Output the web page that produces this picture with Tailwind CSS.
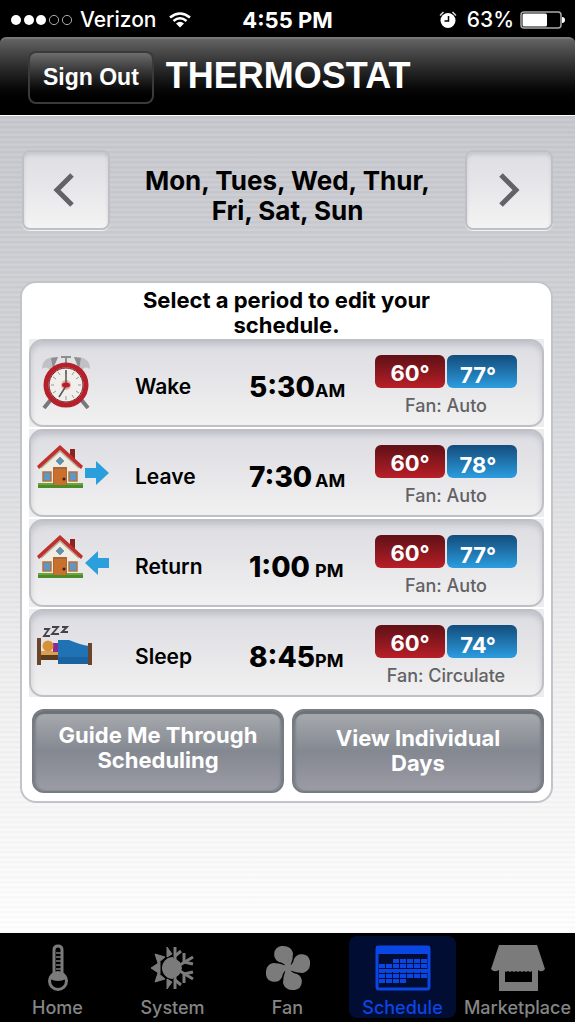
<!DOCTYPE html>
<html lang="en">

<head>
    <meta charset="UTF-8">
    <meta name="viewport" content="width=device-width, initial-scale=1.0">
    <title>Thermostat</title>
    <script src="https://cdn.jsdelivr.net/npm/@tailwindcss/browser@4"></script>
</head>

<body class="bg-black font-[Inter,sans-serif] text-black">
    <!-- shared drawings -->
    <svg class="hidden">
        <symbol id="house" viewBox="0 0 46 44">
            <path d="M33 4h5v14h-5z" fill="#8d2320" />
            <path d="M5 21 23 5l18 16v18H5z" fill="#efece2" />
            <path d="M1 38h45v5H1z" fill="#4c8a2c" />
            <path d="M1 38h45v2H1z" fill="#6aa640" />
            <path d="M4 23 23 6l19 17" fill="none" stroke="#b3aa9c" stroke-width="1.500" />
            <path d="M0 21 23 0l23 21-2 3L23 5 2 24z" fill="#c0302b" />
            <path d="m23 12 4 4-4 4-4-4z" fill="#5b93b8" stroke="#8a969c" />
            <path d="M16 22h14v18H16z" fill="#a8643a" />
            <path d="M17 24h12v16H17z" fill="#c9712c" />
            <circle cx="27" cy="34" r="1.500" fill="#3b1c0c" />
            <path d="M6 27h8v9H6zM32 27h8v9h-8z" fill="#5f97c4" stroke="#b5703f" stroke-width="1.500" />
        </symbol>
        <symbol id="arrow" viewBox="0 0 24 24">
            <path d="M0 7h11V0l13 12-13 12v-7H0z" fill="#2a9fdc" />
        </symbol>
    </svg>

    <div class="flex min-h-screen flex-col">
        <!-- status bar -->
        <div class="grid h-[37px] grid-cols-[1fr_auto_1fr] items-center px-2.5 pt-0.5 text-[21px] leading-6 text-white">
            <div class="flex items-center gap-2">
                <svg class="h-3 w-[62px]" viewBox="0 0 62 12" fill="#fff">
                    <circle cx="6" cy="6" r="5" />
                    <circle cx="19" cy="6" r="5" />
                    <circle cx="31" cy="6" r="5" />
                    <circle cx="44" cy="6" r="4.6" fill="none" stroke="#aaa" />
                    <circle cx="57" cy="6" r="4.6" fill="none" stroke="#aaa" />
                </svg>
                <span class="font-medium">Verizon</span>
                <svg class="ml-1 h-4 w-6" viewBox="0 0 24 16" fill="none" stroke="#fff" stroke-width="2.6">
                    <path d="M2 5.500Q12-2.500 22 5.500M5.500 9Q12 3.500 18.500 9" />
                    <path d="M8 11.500Q12 8 16 11.500L12 15.500z" fill="#fff" stroke="none" />
                </svg>
            </div>
            <span class="text-[22px] font-bold">4:55 PM</span>
            <div class="flex items-center justify-end">
                <svg class="mr-2.5 h-[18px] w-[18px]" viewBox="0 0 18 18">
                    <circle cx="9" cy="9.500" r="7.500" fill="#fff" />
                    <path d="M9.500 5v5H5.500" fill="none" stroke="#000" stroke-width="1.500" />
                    <path d="M1 4.500 4.500 1M17 4.500 13.500 1" stroke="#ddd" stroke-width="1.500" />
                </svg>
                <span class="mr-1.5 font-medium">63%</span>
                <svg class="h-[18px] w-[45px]" viewBox="0 0 45 18">
                    <rect x="1" y="1" width="40" height="16" rx="3" fill="none" stroke="#aaa" stroke-width="1.500" />
                    <rect x="2.500" y="2.500" width="24.500" height="13" rx="1.500" fill="#fff" />
                    <path d="M42 6q3 0 3 3t-3 3z" fill="#fff" />
                </svg>
            </div>
        </div>

        <header class="flex h-[79px] items-center gap-3 rounded-t-md border-t-2 border-b border-t-[#777] border-b-white bg-linear-to-b from-[#636363] to-black to-90% pl-7 font-['Liberation_Sans',sans-serif] text-white">
            <button class="h-[53px] rounded-lg border-2 border-[#3a3a3a] bg-linear-to-b from-[#6d6d6d] to-black px-[13px] text-[23px] font-bold">Sign Out</button>
            <h1 class="pb-0.5 text-[36px] font-bold">THERMOSTAT</h1>
        </header>

        <main class="flex-1 bg-[repeating-linear-gradient(to_bottom,rgba(0,0,0,0.02)_0px,rgba(0,0,0,0.02)_2px,rgba(255,255,255,0.06)_3px,rgba(255,255,255,0.06)_5px),linear-gradient(to_bottom,#c7c8ce,#d1d2d6_28%,#f0f0f1_70%,#ffffff)] pt-[34px] pr-[22px] pb-6 pl-5">
            <!-- day picker -->
            <div class="flex items-center justify-between pl-0.5">
                <button aria-label="Previous days" class="flex h-20 w-[88px] items-center justify-center rounded-lg border-2 border-[#bfc0c6] bg-linear-to-b from-[#dddde3] to-[#f3f3f3] pr-1 shadow-[inset_0_3px_3px_rgba(180,180,190,0.5),0_1px_0_#f4f4f4]">
                    <svg class="h-[34px] w-[22px]" viewBox="0 0 22 34" fill="none" stroke="#636367" stroke-width="5">
                        <path d="M19 2 4 17l15 15" />
                    </svg>
                </button>
                <h2 class="px-1 pt-3 text-center text-[26px] leading-[30px] font-bold">Mon, Tues, Wed, Thur,<br>Fri, Sat, Sun</h2>
                <button aria-label="Next days" class="flex h-20 w-[88px] items-center justify-center rounded-lg border-2 border-[#bfc0c6] bg-linear-to-b from-[#dddde3] to-[#f3f3f3] shadow-[inset_0_3px_3px_rgba(180,180,190,0.5),0_1px_0_#f4f4f4]">
                    <svg class="h-[34px] w-[22px]" viewBox="0 0 22 34" fill="none" stroke="#636367" stroke-width="5">
                        <path d="m3 2 15 15L3 32" />
                    </svg>
                </button>
            </div>

            <!-- schedule card -->
            <section class="mt-[51px] rounded-2xl border-2 border-[#c3c4c9] bg-white px-[7px] pt-[5px] pb-2">
                <h3 class="text-center text-[22px] leading-[25px] font-bold">Select a period to edit your<br>schedule.</h3>

                <ul class="mt-px bg-[#ededef]">
                    <li class="h-[90px] border-b-2 border-white">
                        <button class="grid h-full w-full grid-cols-[104px_114px_126px_1fr] rounded-[14px] border-2 border-[#bfc0c5] bg-linear-to-b from-[#dcdce2] to-[#f1f1f1] text-left shadow-[inset_0_4px_5px_rgba(170,170,182,0.5)]">
                            <svg class="mt-3.5 ml-2.5 h-[54px] w-[50px]" viewBox="0 0 50 54">
                                <path d="M12 42 3 53M38 42l9 11" stroke="#77787b" stroke-width="4" />
                                <path d="M1 14Q1 1 17 2L11 16Q5 10 1 14zM49 14Q49 1 33 2l6 14q6-6 10-2z" fill="#bfc1c4" />
                                <path d="M10 3 17 2 12 14zM40 3 33 2l5 12z" fill="#8c8f92" />
                                <path d="M25 1v9M20 2h10" stroke="#8c8f92" stroke-width="2" />
                                <circle cx="25" cy="30" r="20" fill="#f1efeb" stroke="#b5202b" stroke-width="5" />
                                <circle cx="25" cy="30" r="17" fill="none" stroke="#75141c" />
                                <path d="M25 16v3M25 41v4M10 30h3M37 30h3M17 17l2 3M33 17l-2 3M12 22l3 2M38 22l-3 2M12 38l3-2M38 38l-3-2M33 43l-2-3" stroke="#999" />
                                <circle cx="25" cy="30" r="5" fill="#ecaaaa" />
                                <path d="M25 31V15M25 31l-7 11" stroke="#555" stroke-width="1.500" />
                                <ellipse cx="25" cy="30" rx="4" ry="2.500" fill="#b51f29" />
                            </svg>
                            <span class="pt-8 text-[21px] leading-7 font-semibold">Wake</span>
                            <span class="flex items-baseline pt-7 text-[28px] leading-9 font-extrabold"><span class="w-[66px]">5:30</span><span class="text-lg leading-9 font-bold">AM</span></span>
                            <span class="w-[142px] pt-3.5 text-center">
                                <span class="flex justify-center gap-0.5 text-[22px] leading-8 font-bold text-white">
                                    <span class="h-[33px] w-[70px] rounded-md bg-linear-to-b from-[#5f1016] to-[#b91f27] pt-0.5">60°</span>
                                    <span class="h-[33px] w-[70px] rounded-md bg-linear-to-b from-[#134d7c] to-[#2c9de0] pt-1 pr-2">77°</span>
                                </span>
                                <span class="mt-1.5 block text-lg leading-6 font-medium text-[#626265]">Fan: Auto</span>
                            </span>
                        </button>
                    </li>
                    <li class="h-[90px] border-b-2 border-white">
                        <button class="grid h-full w-full grid-cols-[104px_114px_126px_1fr] rounded-[14px] border-2 border-[#bfc0c5] bg-linear-to-b from-[#dcdce2] to-[#f1f1f1] text-left shadow-[inset_0_4px_5px_rgba(170,170,182,0.5)]">
                            <span class="flex items-center gap-0.5 self-start pt-3.5 pl-1.5">
                                <svg class="h-11 w-[46px]"><use href="#house" /></svg>
                                <svg class="mt-3 h-6 w-6"><use href="#arrow" /></svg>
                            </span>
                            <span class="pt-8 text-[21px] leading-7 font-semibold">Leave</span>
                            <span class="flex items-baseline pt-7 text-[28px] leading-9 font-extrabold"><span class="w-[66px]">7:30</span><span class="text-lg leading-9 font-bold">AM</span></span>
                            <span class="w-[142px] pt-3.5 text-center">
                                <span class="flex justify-center gap-0.5 text-[22px] leading-8 font-bold text-white">
                                    <span class="h-[33px] w-[70px] rounded-md bg-linear-to-b from-[#5f1016] to-[#b91f27] pt-0.5">60°</span>
                                    <span class="h-[33px] w-[70px] rounded-md bg-linear-to-b from-[#134d7c] to-[#2c9de0] pt-1 pr-2">78°</span>
                                </span>
                                <span class="mt-1.5 block text-lg leading-6 font-medium text-[#626265]">Fan: Auto</span>
                            </span>
                        </button>
                    </li>
                    <li class="h-[90px] border-b-2 border-white">
                        <button class="grid h-full w-full grid-cols-[104px_114px_126px_1fr] rounded-[14px] border-2 border-[#bfc0c5] bg-linear-to-b from-[#dcdce2] to-[#f1f1f1] text-left shadow-[inset_0_4px_5px_rgba(170,170,182,0.5)]">
                            <span class="flex items-center gap-0.5 self-start pt-3.5 pl-1.5">
                                <svg class="h-11 w-[46px]"><use href="#house" /></svg>
                                <svg class="mt-3 h-6 w-6 rotate-180"><use href="#arrow" /></svg>
                            </span>
                            <span class="pt-8 text-[21px] leading-7 font-semibold">Return</span>
                            <span class="flex items-baseline pt-7 text-[28px] leading-9 font-extrabold"><span class="w-[66px]">1:00</span><span class="text-lg leading-9 font-bold">PM</span></span>
                            <span class="w-[142px] pt-3.5 text-center">
                                <span class="flex justify-center gap-0.5 text-[22px] leading-8 font-bold text-white">
                                    <span class="h-[33px] w-[70px] rounded-md bg-linear-to-b from-[#5f1016] to-[#b91f27] pt-0.5">60°</span>
                                    <span class="h-[33px] w-[70px] rounded-md bg-linear-to-b from-[#134d7c] to-[#2c9de0] pt-1 pr-2">77°</span>
                                </span>
                                <span class="mt-1.5 block text-lg leading-6 font-medium text-[#626265]">Fan: Auto</span>
                            </span>
                        </button>
                    </li>
                    <li class="h-[90px] border-b-2 border-white">
                        <button class="grid h-full w-full grid-cols-[104px_114px_126px_1fr] rounded-[14px] border-2 border-[#bfc0c5] bg-linear-to-b from-[#dcdce2] to-[#f1f1f1] text-left shadow-[inset_0_4px_5px_rgba(170,170,182,0.5)]">
                            <svg class="mt-3.5 ml-1.5 h-10 w-[55px]" viewBox="0 0 55 40">
                                <path d="M7 4h5l-5 7h6M15 2h6l-6 7h7M25 2h5l-5 5h6" fill="none" stroke="#444" stroke-width="1.800" />
                                <path d="M3 30h20v5H3z" fill="#5b3a22" />
                                <path d="M4 26h17v4H4z" fill="#dba04e" />
                                <path d="M16 18h6v9h-6z" fill="#8d2b93" />
                                <circle cx="11" cy="21" r="5.500" fill="#d8913b" />
                                <path d="M21 15h11q12 5 20 6v18H21z" fill="#1f72b4" />
                                <path d="M21 32h31v7H21z" fill="#1b62a0" />
                                <path d="M0 13h4v27H0zM51 18h4v22h-4z" fill="#6b4529" />
                            </svg>
                            <span class="pt-8 text-[21px] leading-7 font-semibold">Sleep</span>
                            <span class="flex items-baseline pt-7 text-[28px] leading-9 font-extrabold"><span class="w-[66px]">8:45</span><span class="text-lg leading-9 font-bold">PM</span></span>
                            <span class="w-[142px] pt-3.5 text-center">
                                <span class="flex justify-center gap-0.5 text-[22px] leading-8 font-bold text-white">
                                    <span class="h-[33px] w-[70px] rounded-md bg-linear-to-b from-[#5f1016] to-[#b91f27] pt-0.5">60°</span>
                                    <span class="h-[33px] w-[70px] rounded-md bg-linear-to-b from-[#134d7c] to-[#2c9de0] pt-1 pr-2">74°</span>
                                </span>
                                <span class="mt-1.5 block text-lg leading-6 font-medium text-[#626265]">Fan: Circulate</span>
                            </span>
                        </button>
                    </li>
                </ul>

                <div class="mt-2.5 grid grid-cols-2 gap-2 pl-[3px] text-[22px] leading-[25px] font-bold text-white">
                    <button class="h-[84px] rounded-xl border-2 border-[#777c82] bg-linear-to-b from-[#a9adb1] via-[#848890] to-[#9b9ca6] pb-1.5 shadow-[inset_0_3px_1px_#6c7176,inset_2px_0_2px_#7f848a,inset_-2px_0_2px_#7f848a]">Guide Me Through<br>Scheduling</button>
                    <button class="h-[84px] rounded-xl border-2 border-[#777c82] bg-linear-to-b from-[#a9adb1] via-[#848890] to-[#9b9ca6] shadow-[inset_0_3px_1px_#6c7176,inset_2px_0_2px_#7f848a,inset_-2px_0_2px_#7f848a]">View Individual<br>Days</button>
                </div>
            </section>
        </main>

        <!-- tab bar -->
        <nav class="grid h-[89px] grid-cols-5 bg-black pt-[3px] pb-1 text-lg leading-5 font-medium text-[#858585]">
            <a href="#" class="flex flex-col items-center justify-between pt-2">
                <svg class="h-12 w-[22px]" viewBox="0 0 22 48" fill="none" stroke="#7b7b7b" stroke-width="3">
                    <path d="M7 29V6q0-4 4-4t4 4v23" />
                    <circle cx="11" cy="37" r="8.500" />
                    <path d="M3 35q0-7 8-7t8 7q-8 4-16 0z" fill="#7b7b7b" stroke="none" />
                    <path d="M9 9h6M9 13h6M9 17h6M9 21h6M9 25h6" stroke-width="1.500" />
                </svg>
                Home
            </a>
            <a href="#" class="flex flex-col items-center justify-between pt-2">
                <svg class="h-12 w-11" viewBox="0 0 44 48" fill="#7b7b7b">
                    <path d="M22 13v22a11 11 0 0 1 0-22z" />
                    <path d="M21 10 16 3v10zM14 13 4 10l3 9zM9 18 0 24l9 6zM7 29l-3 9 10-3zM16 35v10l5-7z" stroke="#7b7b7b" stroke-linejoin="round" />
                    <g fill="none" stroke="#7b7b7b" stroke-width="3">
                        <path d="M24 3v42M24 24l18-11M24 24l18 11" />
                        <path d="m24 12 6-5M24 36l6 5M33 19V9M33 18l9 2M33 29v10M33 30l9-2" stroke-width="3" />
                    </g>
                    <path d="M22 14q8 2 9 10-1 8-9 10z" />
                </svg>
                System
            </a>
            <a href="#" class="flex flex-col items-center justify-between pt-2">
                <svg class="h-12 w-11" viewBox="0 0 44 48" fill="#7b7b7b">
                    <path id="blade" d="M22 25Q19 19 13 18A8.500 8.500 0 0 1 15 2Q25 1 27 9 27 15 25 20z" />
                    <use href="#blade" transform="rotate(90 22 24)" />
                    <use href="#blade" transform="rotate(180 22 24)" />
                    <use href="#blade" transform="rotate(270 22 24)" />
                    <circle cx="22" cy="24" r="4" />
                </svg>
                Fan
            </a>
            <a href="#" aria-current="page" class="mx-1 flex flex-col items-center justify-between rounded-lg bg-[#020d33] pt-2 text-[#0a46e4]">
                <svg class="h-12 w-14" viewBox="0 0 56 48" fill="#0a46e4">
                    <rect x="2" y="3" width="52" height="42" rx="2" fill="none" stroke="#0a46e4" stroke-width="3" />
                    <path d="M1 2h54v8H1z" />
                    <path d="M18 17h35M4 22h49M4 27h49M4 32h49M4 37h28" fill="none" stroke="#0a46e4" stroke-width="4" stroke-dasharray="6 1" />
                    <path d="M4 25h49v3H4z" />
                </svg>
                Schedule
            </a>
            <a href="#" class="flex flex-col items-center justify-between pt-2">
                <svg class="h-12 w-[54px]" viewBox="0 0 54 48" fill="#7b7b7b">
                    <path d="M8 1h38l8 24q-3 4-7 1v21H8V26q-5 3-8-1zM14 27v11h27V27l-2 1-2-1-2 1-2-1-2 1-2-1-2 1-2-1-2 1-2-1-2 1-2-1-2 1z" fill-rule="evenodd" />
                </svg>
                Marketplace
            </a>
        </nav>
    </div>
</body>

</html>
